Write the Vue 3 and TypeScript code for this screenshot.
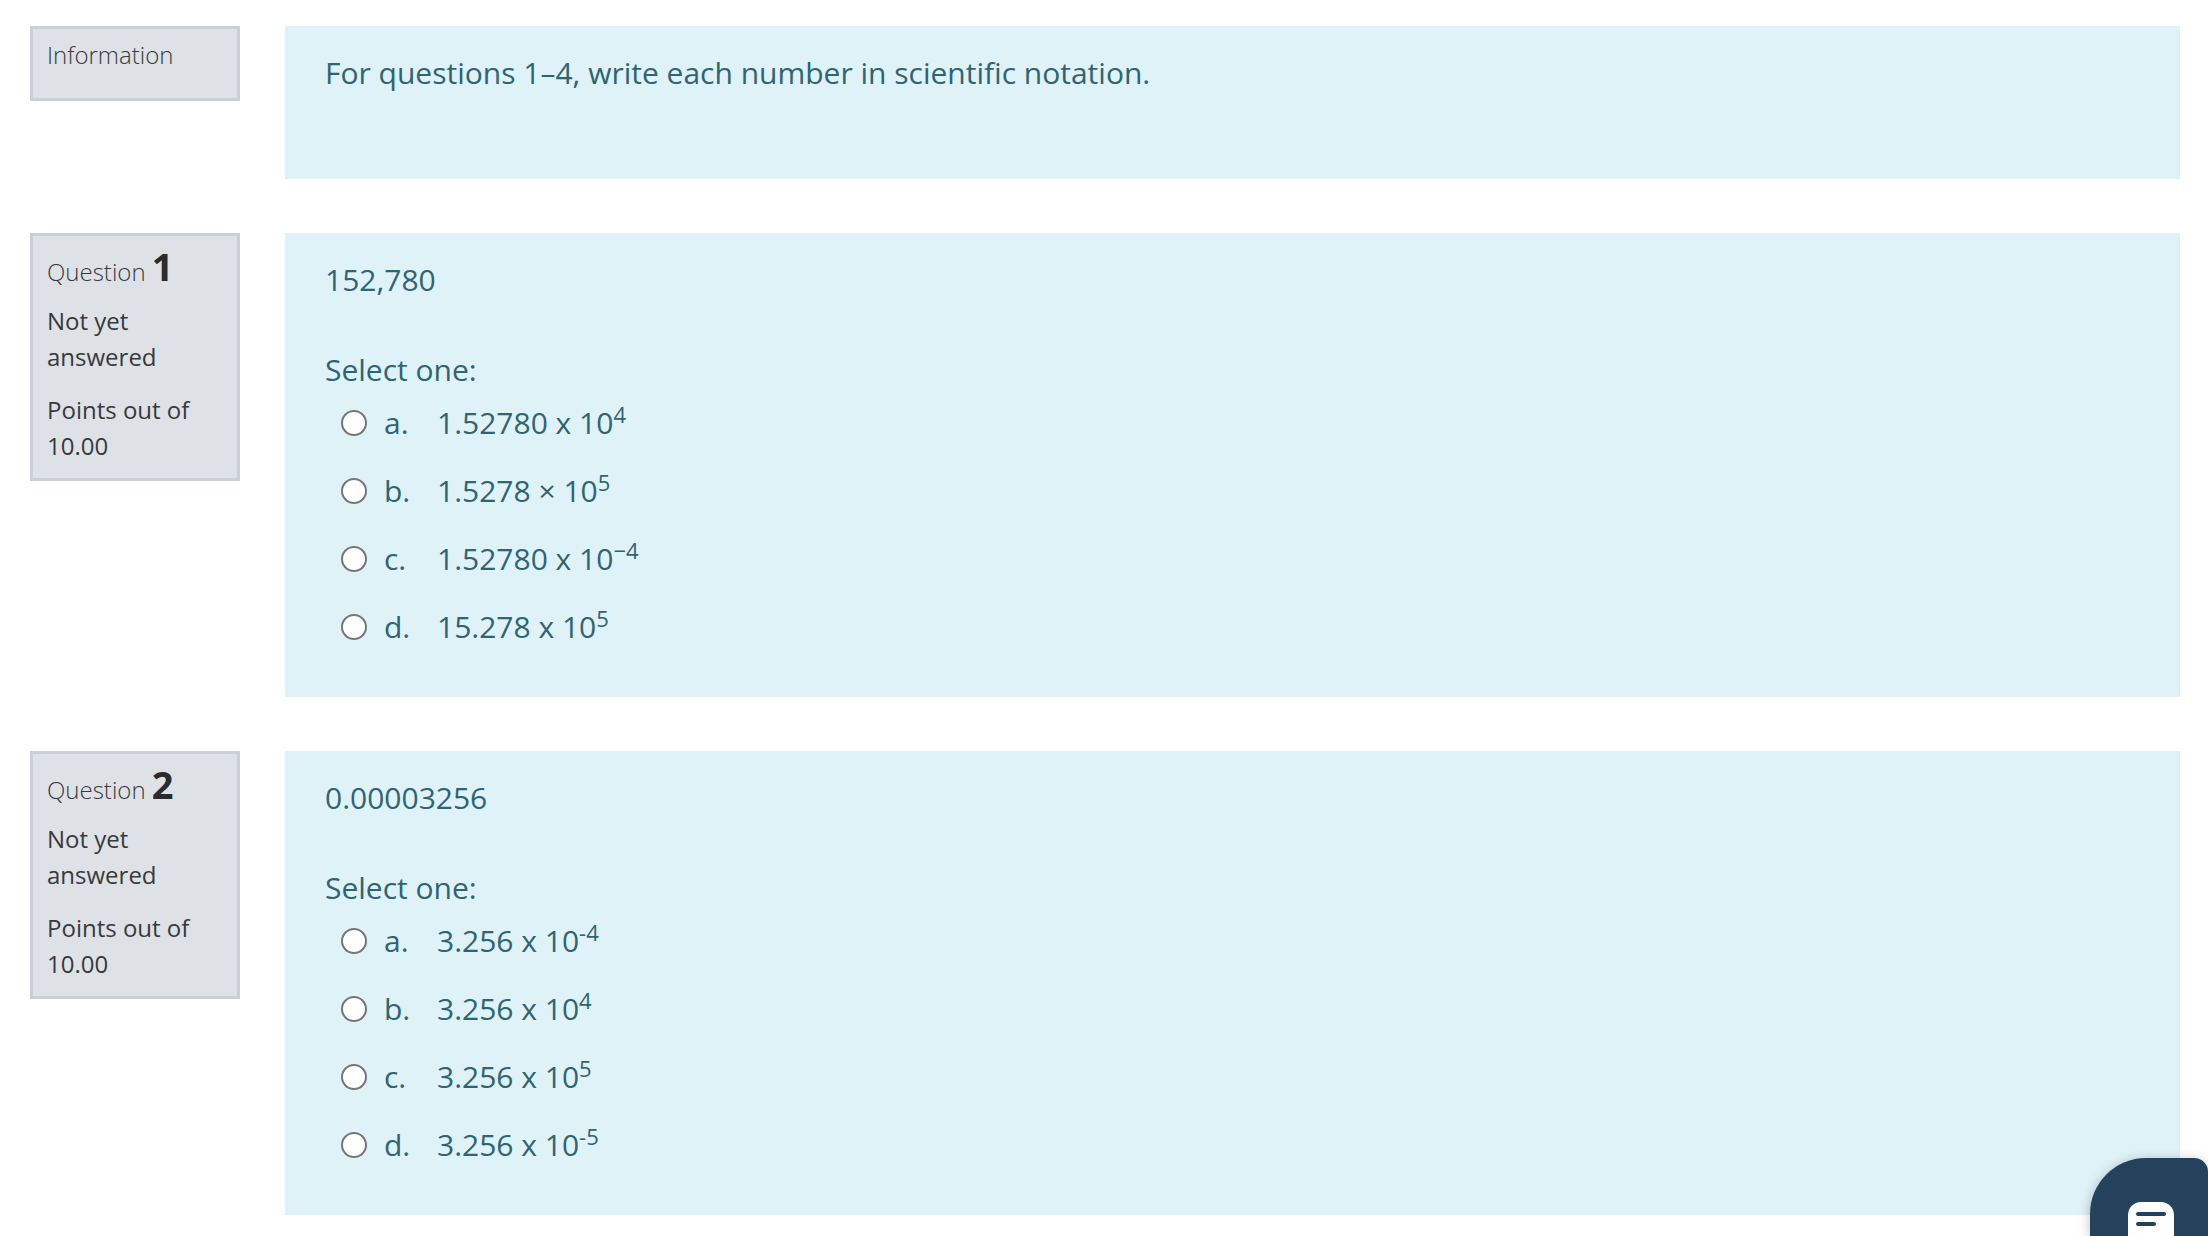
<script setup lang="ts">
interface Option {
  letter: string
  text: string
  exp: string
}

interface Question {
  num: number
  prompt: string
  options: Option[]
}

const questions: Question[] = [
  {
    num: 1,
    prompt: '152,780',
    options: [
      { letter: 'a.', text: '1.52780 x 10', exp: '4' },
      { letter: 'b.', text: '1.5278 × 10', exp: '5' },
      { letter: 'c.', text: '1.52780 x 10', exp: '−4' },
      { letter: 'd.', text: '15.278 x 10', exp: '5' },
    ],
  },
  {
    num: 2,
    prompt: '0.00003256',
    options: [
      { letter: 'a.', text: '3.256 x 10', exp: '-4' },
      { letter: 'b.', text: '3.256 x 10', exp: '4' },
      { letter: 'c.', text: '3.256 x 10', exp: '5' },
      { letter: 'd.', text: '3.256 x 10', exp: '-5' },
    ],
  },
]
</script>

<template>
  <div class="quiz">
    <section class="row">
      <aside class="info info--short">
        <div class="info__label">Information</div>
      </aside>
      <div class="content content--intro">
        <p class="content__text">For questions 1–4, write each number in scientific notation.</p>
      </div>
    </section>

    <section v-for="q in questions" :key="q.num" class="row">
      <aside class="info">
        <div class="info__title">Question <b>{{ q.num }}</b></div>
        <div class="info__state">Not yet answered</div>
        <div class="info__grade">Points out of 10.00</div>
      </aside>
      <div class="content">
        <p class="content__text">{{ q.prompt }}</p>
        <div class="content__select">Select one:</div>
        <label v-for="o in q.options" :key="o.letter" class="option">
          <input type="radio" :name="'q' + q.num" class="option__radio" />
          <span class="option__letter">{{ o.letter }}</span>
          <span>{{ o.text }}<sup class="option__exp">{{ o.exp }}</sup></span>
        </label>
      </div>
    </section>

    <div class="chat">
      <div class="chat__bubble">
        <span class="chat__line"></span>
        <span class="chat__line chat__line--short"></span>
      </div>
    </div>
  </div>
</template>

<style scoped>
.quiz {
  height: 1236px; overflow: hidden; box-sizing: border-box;
  padding: 26px 28px 0 30px; background: #fff;
  font-family: "Open Sans", "Noto Sans", sans-serif;
}
.row {
  display: grid; grid-template-columns: 210px 1fr; column-gap: 45px;
  align-items: start; margin-bottom: 54px;
}
.info {
  box-sizing: border-box; height: 248px; padding: 10px 14px 0;
  background: #dee2e6; border: 3px solid #cbd0d8;
  color: #373a3c; font-size: 24px; line-height: 36px;
}
.info--short { height: 75px; }
.info__label { font-weight: 300; margin-top: -2px; }
.info__title { font-weight: 300; margin-top: 2px; height: 55px; }
.info__title b { font-size: 38px; line-height: 36px; font-weight: 700; color: #2b2b2b; }
.info__state { margin-bottom: 17px; }

.content {
  box-sizing: border-box; height: 464px; padding: 26px 40px 0;
  background: #dff2f8; color: #2f6473; font-size: 30px; line-height: 42px;
}
.content--intro { height: 153px; }
.content__text { margin: 0; }
.content__select { margin-top: 48px; height: 40px; }

.option { display: flex; align-items: center; height: 68px; padding-left: 16px; }
.option__radio {
  appearance: none; box-sizing: border-box; flex: none;
  width: 26px; height: 26px; margin: 0 17px 0 0;
  background: #fff; border: 2px solid #767676; border-radius: 50%;
}
.option__letter { width: 53px; flex: none; }
.option__exp { font-size: 22px; line-height: 0; vertical-align: baseline; position: relative; top: -11px; }

.chat {
  position: fixed; top: 1158px; right: 0; width: 118px; height: 78px;
  display: flex; justify-content: center; padding: 44px 0 0 4px; box-sizing: border-box;
  background: #24425c; border-radius: 56px 14px 0 0;
  box-shadow: 0 2px 12px rgba(0, 0, 0, 0.25);
}
.chat__bubble {
  box-sizing: border-box; width: 46px; height: 46px; padding: 10px 8px 0;
  background: #fff; border-radius: 13px; flex: none;
}
.chat__line { display: block; height: 4px; width: 30px; background: #24425c; border-radius: 2px; }
.chat__line--short { width: 20px; margin-top: 6px; }
</style>
